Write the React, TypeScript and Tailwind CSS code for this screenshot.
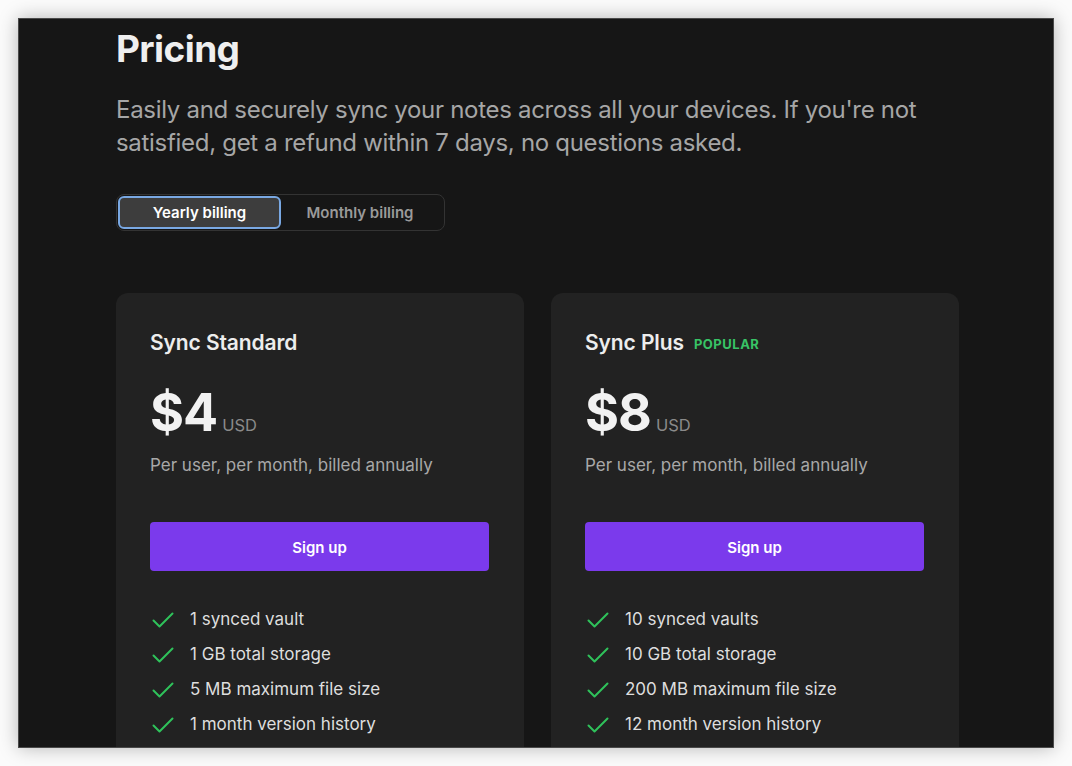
import React from "react";

const Check = () => (
  <svg width="24" height="24" viewBox="0 0 24 24" fill="none" stroke="#2fc25b" strokeWidth="2" strokeLinecap="round" strokeLinejoin="round">
    <path d="M2.5 12.5 L8.5 18.5 L21.5 5.5" />
  </svg>
);

type Plan = { name: string; popular?: boolean; price: string; features: string[] };

const plans: Plan[] = [
  {
    name: "Sync Standard",
    price: "$4",
    features: ["1 synced vault", "1 GB total storage", "5 MB maximum file size", "1 month version history"],
  },
  {
    name: "Sync Plus",
    popular: true,
    price: "$8",
    features: ["10 synced vaults", "10 GB total storage", "200 MB maximum file size", "12 month version history"],
  },
];

function Card({ plan }: { plan: Plan }) {
  return (
    <div className="w-[408px] rounded-[12px] bg-[#222222] pl-[34px] pr-[35px] pt-[35px] pb-10">
      <div className="flex items-center gap-[10px] h-[30px]">
        <span className="text-[21px] font-semibold text-[#ededed] tracking-[-0.1px]">{plan.name}</span>
        {plan.popular && (
          <span className="text-[13px] font-bold tracking-[0.5px] text-[#38c466] mt-[3px]">POPULAR</span>
        )}
      </div>
      <div className="mt-[25px] flex items-baseline h-[60px]">
        <span className="text-[52px] font-bold leading-[60px] text-[#f2f2f2] tracking-[-1px]">{plan.price}</span>
        <span className="ml-[5px] text-[16.5px] text-[#8a8a8a]">USD</span>
      </div>
      <div className="mt-[10px] text-[17px] leading-[24px] text-[#a8a8a8]">Per user, per month, billed annually</div>
      <button className="mt-[45px] w-full h-[49px] rounded-[4px] bg-[#7b3aec] pt-[3px] text-white text-[15px] font-semibold">
        Sign up
      </button>
      <ul className="mt-[37px] flex flex-col gap-[11px]">
        {plan.features.map((f) => (
          <li key={f} className="flex items-center h-[24px]">
            <span className="w-[24px] ml-[1px]"><Check /></span>
            <span className="ml-[15px] text-[17px] text-[#dedede]">{f}</span>
          </li>
        ))}
      </ul>
    </div>
  );
}

export default function App() {
  return (
    <div className="w-[1072px] h-[766px] bg-[#fbfbfb] pt-[18px] pl-[18px]" style={{ fontFamily: "Inter, 'Noto Sans', sans-serif" }}>
      <div className="w-[1036px] h-[730px] bg-[#161616] border border-[#4a4a4a] overflow-hidden shadow-[0_0_18px_rgba(0,0,0,0.28)]">
        <div className="pl-[97px] pt-[10px]">
          <h1 className="text-[37px] font-bold leading-[40px] text-[#efefef] tracking-[-0.6px]">Pricing</h1>
          <p className="mt-[24px] w-[840px] text-[24px] leading-[33px] text-[#a6a6a6] tracking-[-0.3px]">
            Easily and securely sync your notes across all your devices. If you're not satisfied, get a refund within 7 days, no questions asked.
          </p>
          <div className="mt-[35px] flex w-[329px] h-[37px] rounded-[8px] border border-[#333333] p-[1px]">
            <div className="w-[163px] h-full rounded-[6px] border-2 border-[#79a8e3] bg-[#3d3d3d] flex items-center justify-center pt-[2px] text-[15px] font-semibold text-white">
              Yearly billing
            </div>
            <div className="flex-1 flex items-center justify-center pr-[4px] pt-[2px] text-[15px] font-semibold text-[#9a9a9a]">
              Monthly billing
            </div>
          </div>
          <div className="mt-[62px] flex gap-[27px]">
            {plans.map((p) => (
              <Card key={p.name} plan={p} />
            ))}
          </div>
        </div>
      </div>
    </div>
  );
}
